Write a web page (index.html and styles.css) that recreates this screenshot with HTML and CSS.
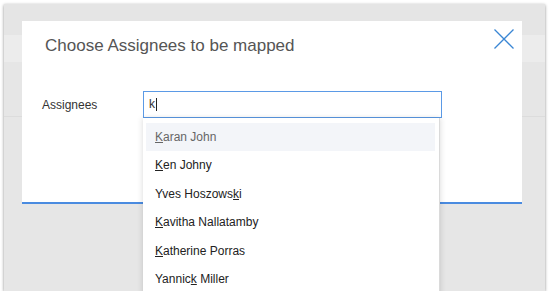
FILE: index.html
```html
<!DOCTYPE html>
<html lang="en">
<head>
  <meta charset="UTF-8" />
  <meta name="viewport" content="width=device-width, initial-scale=1.0" />
  <title>Choose Assignees</title>
  <link rel="stylesheet" href="styles.css">
</head>
<body>
  <div class="screen">
    <div class="modal">
      <div class="modal-head">
        <h2>Choose Assignees to be mapped</h2>
        <button class="close" aria-label="Close">
          <svg width="20" height="20" viewBox="0 0 20 20">
            <path d="M0.5 0.5 L19.5 19.5 M19.5 0.5 L0.5 19.5" stroke="#3a86d4" stroke-width="1.3" fill="none" />
          </svg>
        </button>
      </div>
      <div class="field">
        <label class="field-label">Assignees</label>
        <div class="picker">
          <div class="picker-input">k<span class="caret"></span></div>
          <ul class="menu">
            <li class="active"><u>K</u>aran John</li>
            <li><u>K</u>en Johny</li>
            <li>Yves Hoszows<u>k</u>i</li>
            <li><u>K</u>avitha Nallatamby</li>
            <li><u>K</u>atherine Porras</li>
            <li>Yannic<u>k</u> Miller</li>
          </ul>
        </div>
      </div>
    </div>
  </div>
</body>
</html>
```

FILE: styles.css
```css
body {
  margin: 0;
  background: #fff;
  font-family: 'Liberation Sans', Arial, sans-serif;
}
.screen {
  position: relative;
  margin: 4px 0 0 4px;
  width: 541px;
  height: 287px;
  overflow: hidden;
  background:
    linear-gradient(#e5e5e5 0, #e5e5e5 31px, #ececec 31px, #ececec 58px, #e6e6e6 58px, #e6e6e6 112px, #dcdcdc 112px, #dcdcdc 113px, #e6e6e6 113px);
  box-shadow: 0 1px 3px rgba(0,0,0,0.45);
}
.modal {
  margin: 17px 0 0 18px;
  width: 500px;
  height: 181px;
  background: #fff;
  border-bottom: 2px solid #4a8be0;
}
.modal-head {
  display: flex;
  justify-content: space-between;
  padding: 15px 8px 0 23px;
}
.modal-head h2 {
  margin: 0;
  font-size: 17px;
  font-weight: normal;
  color: #555;
  line-height: 20px;
}
.close {
  border: 0;
  background: none;
  padding: 0;
  margin-top: -7px;
  width: 20px;
  height: 20px;
}
.close svg {
  display: block;
}
.field {
  display: flex;
  align-items: flex-start;
  margin-top: 35px;
  padding-left: 20px;
}
.field-label {
  width: 101px;
  font-size: 12px;
  color: #333;
  line-height: 29px;
}
.picker {
  position: relative;
  width: 299px;
}
.picker-input {
  height: 25px;
  border: 1px solid #5b9ae6;
  padding-left: 5px;
  font-size: 12px;
  line-height: 25px;
  color: #333;
  display: flex;
  align-items: center;
}
.caret {
  display: inline-block;
  width: 1px;
  height: 13px;
  background: #222;
  margin-left: 1px;
}
.menu {
  position: absolute;
  top: 27px;
  left: 0;
  width: 297px;
  height: 190px;
  margin: 0;
  padding: 5px 4px 0 3px;
  box-sizing: border-box;
  list-style: none;
  background: #fff;
  border-right: 1px solid #dadada;
  box-shadow: -2px 0 5px rgba(0,0,0,0.08), 2px 0 5px rgba(0,0,0,0.08);
}
.menu li {
  height: 28.4px;
  line-height: 28px;
  padding-left: 9px;
  font-size: 12px;
  color: #222;
}
.menu li.active {
  background: #f3f5f9;
  color: #666;
}
```
